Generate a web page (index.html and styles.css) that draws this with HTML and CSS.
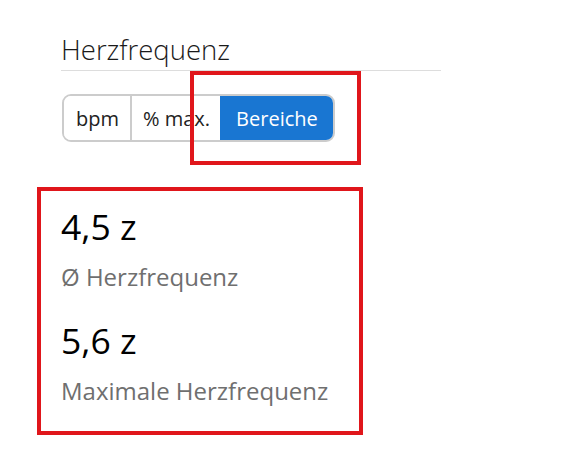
FILE: index.html
```html
<!DOCTYPE html>
<html lang="de">
<head>
<meta charset="utf-8">
<link rel="stylesheet" href="styles.css">
</head>
<body>
<div class="page">
  <h2 class="title">Herzfrequenz</h2>
  <div class="btn-group">
    <button class="btn">bpm</button>
    <button class="btn">% max.</button>
    <button class="btn active">Bereiche</button>
  </div>
  <div class="stats">
    <div class="stat">
      <div class="value">4,5 z</div>
      <div class="label">Ø Herzfrequenz</div>
    </div>
    <div class="stat">
      <div class="value">5,6 z</div>
      <div class="label">Maximale Herzfrequenz</div>
    </div>
  </div>
  <div class="mark mark-1"></div>
  <div class="mark mark-2"></div>
</div>
</body>
</html>
```
FILE: styles.css
```css
html, body {
  margin: 0;
  padding: 0;
  background: #fff;
}
body {
  font-family: "Open Sans", "Liberation Sans", sans-serif;
  color: #222;
}
.page {
  position: relative;
  width: 563px;
  height: 473px;
  padding: 32px 0 0 61px;
  box-sizing: border-box;
}
.title {
  width: 380px;
  margin: 0;
  font-size: 27.5px;
  font-weight: 300;
  line-height: 36px;
  color: #1a1a1a;
  border-bottom: 1px solid #ddd;
  padding-bottom: 2px;
}
.btn-group {
  display: inline-flex;
  margin-top: 23px;
  margin-left: 1px;
  height: 48px;
  border: 2px solid #ccc;
  border-radius: 9px;
  overflow: hidden;
  box-sizing: border-box;
}
.btn {
  font-family: inherit;
  font-size: 20px;
  color: #222;
  background: #fff;
  border: none;
  padding: 0 11px 0 12px;
  margin: 0;
  height: 100%;
}
.btn + .btn {
  border-left: 2px solid #ccc;
  padding: 0 10px 0 11px;
}
.btn.active {
  background: #1976d2;
  color: #fff;
  padding: 0 15px 0 16px;
  border-left: none;
}
.stats {
  margin-top: 62px;
  display: flex;
  flex-direction: column;
  gap: 25px;
}
.value {
  font-size: 35.5px;
  line-height: 44px;
  color: #000;
}
.label {
  font-size: 24px;
  line-height: 32px;
  color: #6f6f6f;
  margin-top: 13px;
}
.mark {
  position: absolute;
  border: 4px solid #e0161b;
  box-sizing: border-box;
}
.mark-1 {
  left: 190px;
  top: 71px;
  width: 171px;
  height: 94px;
}
.mark-2 {
  left: 37px;
  top: 187px;
  width: 326px;
  height: 248px;
}
```
